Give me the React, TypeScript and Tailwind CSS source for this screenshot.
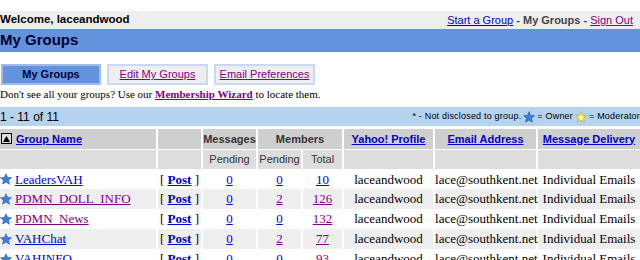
import React from 'react';

const BLUE = 'text-[#0000cc]';
const PURPLE = 'text-[#800080]';

function Star({ color = 'owner' }: { color?: 'owner' | 'moderator' }) {
  const fill = color === 'owner' ? '#3b7ee0' : '#ffff66';
  const stroke = color === 'owner' ? '#1f4fa8' : '#9a9a40';
  return (
    <svg width="12" height="12" viewBox="0 0 24 24" className="inline-block">
      <path
        d="M12 1.5l3.1 7.3 7.9.6-6 5.2 1.9 7.8L12 18.2l-6.9 4.2 1.9-7.8-6-5.2 7.9-.6z"
        fill={fill}
        stroke={stroke}
        strokeWidth="1.2"
      />
    </svg>
  );
}

function SortIcon() {
  return (
    <span className="inline-flex h-[11px] w-[11px] items-center justify-center border border-black bg-[#dddddd] align-middle">
      <svg width="7" height="6" viewBox="0 0 7 6">
        <path d="M3.5 0L7 6H0z" fill="#000" />
      </svg>
    </span>
  );
}

type Row = {
  name: string;
  nameVisited: boolean;
  msgPending: string;
  memPending: string;
  memPendingVisited: boolean;
  total: string;
  totalVisited: boolean;
};

const rows: Row[] = [
  { name: 'LeadersVAH', nameVisited: false, msgPending: '0', memPending: '0', memPendingVisited: false, total: '10', totalVisited: false },
  { name: 'PDMN_DOLL_INFO', nameVisited: true, msgPending: '0', memPending: '2', memPendingVisited: true, total: '126', totalVisited: true },
  { name: 'PDMN_News', nameVisited: true, msgPending: '0', memPending: '0', memPendingVisited: false, total: '132', totalVisited: true },
  { name: 'VAHChat', nameVisited: false, msgPending: '0', memPending: '2', memPendingVisited: true, total: '77', totalVisited: true },
  { name: 'VAHINFO', nameVisited: false, msgPending: '0', memPending: '0', memPendingVisited: false, total: '93', totalVisited: true },
];

export default function App() {
  return (
    <div className="h-[260px] w-[640px] overflow-hidden bg-white font-['Liberation_Sans',Arial,sans-serif] text-black">
      <div className="h-[11px]" />

      {/* welcome bar */}
      <div className="flex h-[18px] items-center justify-between bg-[#eeeeee] pr-[7px]">
        <span className="text-[11.5px] font-bold">Welcome, laceandwood</span>
        <span className="text-[11px] text-[#444444]">
          <a className={`${BLUE} underline`}>Start a Group</a>
          <span className="font-bold"> - My Groups - </span>
          <a className={`${PURPLE} underline`}>Sign Out</a>
        </span>
      </div>

      {/* title bar */}
      <div className="flex h-[23px] items-center bg-[#6393dc]">
        <h1 className="text-[15px] font-bold text-[#000033]">My Groups</h1>
      </div>

      {/* tabs */}
      <div className="mt-[12px] flex h-[21px] gap-[6px] pl-[1px]">
        <div className="flex w-[100px] items-center justify-center border-2 border-[#9fbbe8] bg-[#6393dc] text-[11px] font-bold text-[#000033]">
          My Groups
        </div>
        <div className="flex w-[101px] items-center justify-center border-2 border-[#c9d9f1] bg-[#eeeeee] text-[11px]">
          <a className={`${PURPLE} underline`}>Edit My Groups</a>
        </div>
        <div className="flex w-[101px] items-center justify-center border-2 border-[#c9d9f1] bg-[#eeeeee] text-[11px]">
          <a className={`${PURPLE} underline`}>Email Preferences</a>
        </div>
      </div>

      <p className="mt-[1px] h-[16px] font-['Liberation_Serif','Times_New_Roman',serif] text-[11px] leading-[16px]">
        Don&apos;t see all your groups? Use our{' '}
        <a className={`${PURPLE} font-bold underline`}>Membership Wizard</a> to locate them.
      </p>

      {/* info bar */}
      <div className="mt-[5px] flex h-[19px] items-center justify-between whitespace-nowrap bg-[#b5d3ef]">
        <span className="text-[12px]">1 - 11 of 11</span>
        <span className="flex items-center gap-[2px] text-[9px] tracking-[0.2px]">
          <span>* - Not disclosed to group.</span>
          <Star />
          <span>= Owner</span>
          <Star color="moderator" />
          <span>= Moderator</span>
        </span>
      </div>

      {/* groups table */}
      <table className="mt-[3px] w-[640px] table-fixed border-collapse">
        <colgroup>
          <col className="w-[157px]" />
          <col className="w-[45px]" />
          <col className="w-[55px]" />
          <col className="w-[45px]" />
          <col className="w-[41px]" />
          <col className="w-[91px]" />
          <col className="w-[103px]" />
          <col className="w-[103px]" />
        </colgroup>
        <thead>
          <tr className="h-[20px] bg-[#cfcfcf] text-[11px] font-bold">
            <th className="border-r-2 border-b border-white pl-[1px] text-left">
              <span className="flex items-center gap-[4px]">
                <SortIcon />
                <a className={`${BLUE} underline`}>Group Name</a>
              </span>
            </th>
            <th className="border-r-2 border-b border-white" />
            <th className="border-r-2 border-b border-white text-[#333333]">Messages</th>
            <th colSpan={2} className="border-r-2 border-b border-white text-[#333333]">
              Members
            </th>
            <th className="border-r-2 border-b border-white">
              <a className={`${BLUE} underline`}>Yahoo! Profile</a>
            </th>
            <th className="border-r-2 border-b border-white">
              <a className={`${BLUE} underline`}>Email Address</a>
            </th>
            <th className="border-b border-white">
              <a className={`${BLUE} underline`}>Message Delivery</a>
            </th>
          </tr>
          <tr className="h-[20px] bg-[#dddddd] text-[11px] font-normal text-[#333333]">
            <td className="border-r-2 border-b border-white" />
            <td className="border-r-2 border-b border-white" />
            <td className="border-r-2 border-b border-white text-center">Pending</td>
            <td className="border-r-2 border-b border-white text-center">Pending</td>
            <td className="border-r-2 border-b border-white text-center">Total</td>
            <td className="border-r-2 border-b border-white" />
            <td className="border-r-2 border-b border-white" />
            <td className="border-b border-white" />
          </tr>
        </thead>
        <tbody className="font-['Liberation_Serif','Times_New_Roman',serif] text-[13px]">
          {rows.map((r, i) => (
            <tr key={r.name} className={`h-[20px] ${i % 2 === 1 ? 'bg-[#eeeeee]' : 'bg-white'}`}>
              <td className="border-r-2 border-white">
                <span className="flex items-center gap-[3px] whitespace-nowrap">
                  <Star />
                  <a className={`${r.nameVisited ? PURPLE : BLUE} underline`}>{r.name}</a>
                </span>
              </td>
              <td className="border-r-2 border-white text-center whitespace-nowrap">
                [ <a className={`${BLUE} font-bold underline`}>Post</a> ]
              </td>
              <td className="border-r-2 border-white text-center">
                <a className={`${BLUE} underline`}>{r.msgPending}</a>
              </td>
              <td className="border-r-2 border-white text-center">
                <a className={`${r.memPendingVisited ? PURPLE : BLUE} underline`}>{r.memPending}</a>
              </td>
              <td className="border-r-2 border-white text-center">
                <a className={`${r.totalVisited ? PURPLE : BLUE} underline`}>{r.total}</a>
              </td>
              <td className="border-r-2 border-white text-center whitespace-nowrap">laceandwood</td>
              <td className="border-r-2 border-white text-center whitespace-nowrap">lace@southkent.net</td>
              <td className="text-center whitespace-nowrap">Individual Emails</td>
            </tr>
          ))}
        </tbody>
      </table>
    </div>
  );
}
